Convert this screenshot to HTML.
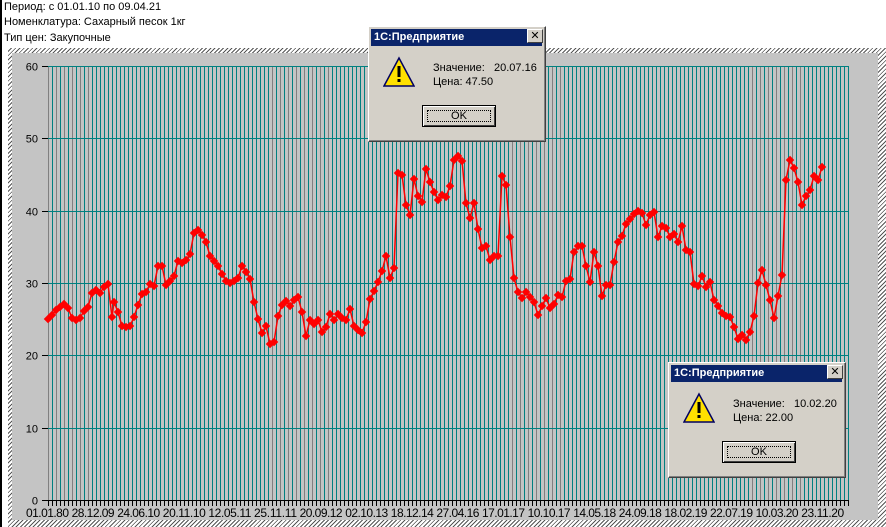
<!DOCTYPE html>
<html><head><meta charset="utf-8"><style>
body{margin:0;width:886px;height:527px;overflow:hidden;background:#fff;position:relative;font-family:"Liberation Sans",sans-serif;font-size:11px}
.t{position:absolute;left:4px;color:#000}
.hatch{position:absolute;background:repeating-linear-gradient(135deg,#fff 0 2px,#555 2px 3px)}
.dlg{position:absolute;width:176px;height:114px;background:#d4d0c8;border:1px solid;border-color:#fff #404040 #404040 #fff;box-shadow:inset -1px -1px #808080}
.tb{position:absolute;left:2px;top:2px;right:3px;height:17px;background:#0a246a;color:#fff;font-weight:bold;font-size:11px;line-height:17px;padding-left:3px}
.x{position:absolute;right:2px;top:2px;width:14px;height:12px;background:#d4d0c8;border:1px solid;border-color:#fff #404040 #404040 #fff;color:#000;font-size:11px;line-height:12px;text-align:center}
.msg{position:absolute;left:64px;top:34px;color:#000;line-height:14px}
.ok{position:absolute;left:53px;top:78px;width:72px;height:20px;border:1px solid #000;box-shadow:inset 1px 1px #fff,inset -1px -1px #404040;text-align:center;line-height:20px;color:#000}
.ok span{position:absolute;left:4px;top:4px;right:4px;bottom:4px;border:1px dotted #000}
</style></head><body>
<div style="position:absolute;left:0;top:0;width:2px;height:527px;background:#000"></div>
<div class="t" style="top:1px">Период: с 01.01.10 по 09.04.21</div>
<div class="t" style="top:16px">Номенклатура: Сахарный песок 1кг</div>
<div class="t" style="top:32px">Тип цен: Закупочные</div>
<div class="hatch" style="left:8px;top:48px;width:878px;height:479px"></div>
<div style="position:absolute;left:12px;top:53px;width:866px;height:467px;background:#c4c4c4"></div>
<svg id="ch" style="position:absolute;left:0;top:0" width="886" height="527"></svg>
<div class="dlg" style="left:368px;top:26px"><div class="tb">1С:Предприятие</div><div class="x">✕</div>
<svg style="position:absolute;left:14px;top:29px" width="32" height="32"><polygon points="16,2 31,30 1,30" fill="#ffe000" stroke="#000060" stroke-width="1.5"/><rect x="14.5" y="10" width="3" height="11" fill="#000"/><rect x="14.5" y="23" width="3" height="3" fill="#000"/></svg>
<div class="msg">Значение:&nbsp;&nbsp; 20.07.16<br>Цена: 47.50</div><div class="ok"><span></span>OK</div></div>
<div class="dlg" style="left:668px;top:362px"><div class="tb">1С:Предприятие</div><div class="x">✕</div>
<svg style="position:absolute;left:14px;top:29px" width="32" height="32"><polygon points="16,2 31,30 1,30" fill="#ffe000" stroke="#000060" stroke-width="1.5"/><rect x="14.5" y="10" width="3" height="11" fill="#000"/><rect x="14.5" y="23" width="3" height="3" fill="#000"/></svg>
<div class="msg">Значение:&nbsp;&nbsp; 10.02.20<br>Цена: 22.00</div><div class="ok"><span></span>OK</div></div>
<script>
var s='',ns=document.getElementById('ch');
for(var x=48;x<=848;x+=4){var g=Math.sin(x/38)>0.7&&(x/4)%2==0;s+='<line x1="'+(x+.5)+'" y1="66" x2="'+(x+.5)+'" y2="500" stroke="'+(g?'#808080':'#008080')+'"/>';s+='<line x1="'+(x+.5)+'" y1="500" x2="'+(x+.5)+'" y2="506" stroke="#000"/>';}
for(var i=0;i<=6;i++){var y=Math.round(500-i*72.33)+.5;s+='<line x1="48" y1="'+y+'" x2="848" y2="'+y+'" stroke="#008080"/><line x1="42" y1="'+y+'" x2="48" y2="'+y+'" stroke="#000"/><text x="38" y="'+(y+4)+'" text-anchor="end" font-size="11" font-family="Liberation Sans">'+(i*10)+'</text>';}
s+='<line x1="48" y1="500.5" x2="848" y2="500.5" stroke="#000"/>';
var d=[48,319,52,315,56,310,60,307,64,304,68,308,72,318,76,320,80,318,84,311,88,307,92,293,96,290,100,293,104,287,108,284,112,317,114,302,118,312,122,326,126,327,130,326,134,317,138,305,142,294,146,292,150,284,154,286,158,266,162,266,166,285,170,281,174,276,178,261,182,263,186,260,190,254,194,233,198,230,202,235,206,242,210,256,214,261,218,266,222,274,226,281,230,283,234,281,238,278,242,266,246,272,250,279,254,302,258,319,262,333,266,326,270,344,274,342,278,316,282,305,286,301,290,306,294,300,298,297,302,312,306,336,310,320,314,324,318,320,322,332,326,327,330,314,334,320,338,314,342,318,346,320,350,309,354,326,358,330,362,333,366,322,370,299,374,291,378,282,382,271,386,256,390,278,394,268,398,173,402,175,406,205,410,215,414,179,418,196,422,202,426,169,430,182,434,192,438,200,442,195,446,197,450,186,454,160,458,156,462,161,466,203,470,218,474,203,478,229,482,248,486,246,490,260,494,256,498,256,502,176,506,185,510,237,514,278,518,292,522,298,526,292,530,297,534,302,538,315,542,306,546,298,550,308,554,304,558,295,562,297,566,281,570,279,574,252,578,246,582,246,586,266,590,282,594,252,598,266,602,296,606,285,610,285,614,262,618,242,622,236,626,224,630,219,634,214,638,211,642,213,646,225,650,215,654,212,658,237,662,226,666,228,670,237,674,234,678,242,682,226,686,250,690,252,694,284,698,286,702,276,706,287,710,282,714,300,718,306,722,313,726,316,730,317,734,327,738,339,742,335,746,340,750,332,754,316,758,283,762,270,766,285,770,300,774,318,778,296,782,275,786,180,790,160,794,168,798,182,802,205,806,196,810,190,814,176,818,180,822,167];
var p='';for(var i=0;i<d.length;i+=2)p+=d[i]+','+d[i+1]+' ';
s+='<polyline points="'+p+'" fill="none" stroke="#ff0000" stroke-width="1.5"/>';
for(var i=0;i<d.length;i+=2)s+='<rect x="'+(d[i]-3)+'" y="'+(d[i+1]-3)+'" width="6" height="6" fill="#ff0000" transform="rotate(45 '+d[i]+' '+d[i+1]+')"/>';
var L='01.01.80 28.12.09 24.06.10 20.11.10 12.05.11 25.11.11 20.09.12 02.10.13 18.12.14 27.04.16 17.01.17 10.10.17 14.05.18 24.09.18 18.02.19 22.07.19 10.03.20 23.11.20'.split(' ');
for(var i=0;i<L.length;i++)s+='<text x="'+(26+i*45.6)+'" y="517" font-size="12" font-family="Liberation Sans" textLength="43">'+L[i]+'</text>';
ns.innerHTML=s;
</script>
</body></html>
